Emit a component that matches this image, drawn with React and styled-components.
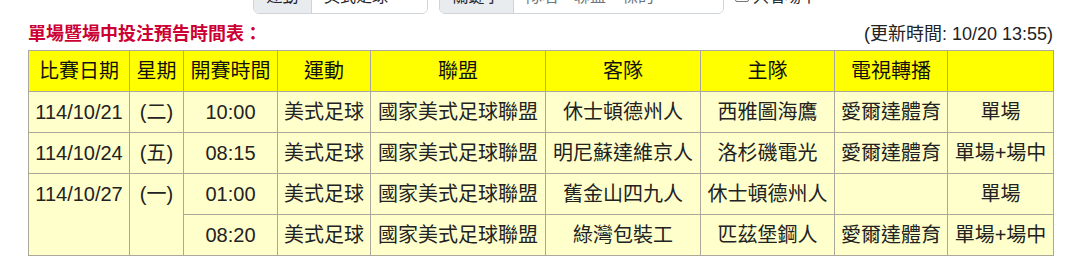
import React from 'react'
import styled, { createGlobalStyle } from 'styled-components'

const GlobalStyle = createGlobalStyle`
  body {
    margin: 0;
    background: #ffffff;
    font-family: 'Liberation Sans', 'Noto Sans CJK TC', sans-serif;
    color: #222222;
    overflow: hidden;
  }
`

const Page = styled.div`
  width: 1080px;
  padding: 0 27px 0 28px;
  box-sizing: border-box;
`

const Toolbar = styled.div`
  display: flex;
  align-items: center;
  gap: 11px;
  height: 38px;
  margin-top: -24px;
  padding-left: 225px;
`

const InputGroup = styled.div`
  display: flex;
  width: ${(p) => p.width}px;
  height: 38px;
  border: 1px solid #ced4da;
  border-radius: 6px;
  overflow: hidden;
  box-sizing: border-box;
  font-size: 16px;
`

const GroupLabel = styled.span`
  display: flex;
  align-items: center;
  justify-content: center;
  width: ${(p) => p.width}px;
  background: #e9ecef;
  border-right: 1px solid #ced4da;
  color: #212529;
`

const GroupValue = styled.span`
  display: flex;
  align-items: center;
  flex: 1;
  padding-left: 12px;
  color: ${(p) => (p.placeholder ? '#6c757d' : '#212529')};
  background: #ffffff;
`

const CheckLabel = styled.label`
  display: flex;
  align-items: center;
  gap: 4px;
  font-size: 16px;
  color: #212529;
`

const Box = styled.span`
  width: 12px;
  height: 12px;
  border: 1px solid #767676;
  border-radius: 2px;
  background: #ffffff;
`

const Heading = styled.div`
  display: flex;
  justify-content: space-between;
  align-items: center;
  height: 24px;
  margin-top: 8px;
  margin-bottom: 4px;
`

const Title = styled.h2`
  margin: 0;
  font-size: 18px;
  font-weight: bold;
  color: #cc0033;
  line-height: 24px;
`

const Updated = styled.span`
  font-size: 18px;
  line-height: 24px;
  color: #222222;
`

const Table = styled.table`
  width: 1026px;
  table-layout: fixed;
  border-collapse: collapse;
  border-top: 1px solid #a0a0a0;
  border-right: 1px solid #a0a0a0;
  border-left: 1px solid #666666;
  border-bottom: 1px solid #666666;
  font-size: 20px;
`

const Th = styled.th`
  background: #ffff00;
  border: 1px solid #a8a8a0;
  padding: 6px 0;
  line-height: 28px;
  font-weight: normal;
  color: #111111;
  text-align: center;
  white-space: nowrap;
`

const Td = styled.td`
  background: #ffffcc;
  border: 1px solid #aaa89a;
  padding: 6px 0;
  line-height: 28px;
  color: #222222;
  text-align: center;
  vertical-align: top;
  white-space: nowrap;
`

const widths = [101, 54, 94, 93, 175, 155, 134, 113, 106]
const headers = ['比賽日期', '星期', '開賽時間', '運動', '聯盟', '客隊', '主隊', '電視轉播', '']

const days = [
  {
    date: '114/10/21',
    week: '(二)',
    games: [{ time: '10:00', away: '休士頓德州人', home: '西雅圖海鷹', tv: '愛爾達體育', type: '單場' }],
  },
  {
    date: '114/10/24',
    week: '(五)',
    games: [{ time: '08:15', away: '明尼蘇達維京人', home: '洛杉磯電光', tv: '愛爾達體育', type: '單場+場中' }],
  },
  {
    date: '114/10/27',
    week: '(一)',
    games: [
      { time: '01:00', away: '舊金山四九人', home: '休士頓德州人', tv: '', type: '單場' },
      { time: '08:20', away: '綠灣包裝工', home: '匹茲堡鋼人', tv: '愛爾達體育', type: '單場+場中' },
    ],
  },
]

export default function App() {
  return (
    <Page>
      <GlobalStyle />
      <Toolbar>
        <InputGroup width={175}>
          <GroupLabel width={57}>運動</GroupLabel>
          <GroupValue>美式足球</GroupValue>
        </InputGroup>
        <InputGroup width={285}>
          <GroupLabel width={73}>關鍵字</GroupLabel>
          <GroupValue placeholder>隊名、聯盟、標的</GroupValue>
        </InputGroup>
        <CheckLabel>
          <Box />
          只看場中
        </CheckLabel>
      </Toolbar>
      <Heading>
        <Title>單場暨場中投注預告時間表：</Title>
        <Updated>(更新時間: 10/20 13:55)</Updated>
      </Heading>
      <Table>
        <colgroup>
          {widths.map((w, i) => (
            <col key={i} style={{ width: w }} />
          ))}
        </colgroup>
        <thead>
          <tr>
            {headers.map((h, i) => (
              <Th key={i}>{h}</Th>
            ))}
          </tr>
        </thead>
        <tbody>
          {days.map((d) =>
            d.games.map((g, i) => (
              <tr key={d.date + g.time}>
                {i === 0 && <Td rowSpan={d.games.length}>{d.date}</Td>}
                {i === 0 && <Td rowSpan={d.games.length}>{d.week}</Td>}
                <Td>{g.time}</Td>
                <Td>美式足球</Td>
                <Td>國家美式足球聯盟</Td>
                <Td>{g.away}</Td>
                <Td>{g.home}</Td>
                <Td>{g.tv}</Td>
                <Td>{g.type}</Td>
              </tr>
            ))
          )}
        </tbody>
      </Table>
    </Page>
  )
}
